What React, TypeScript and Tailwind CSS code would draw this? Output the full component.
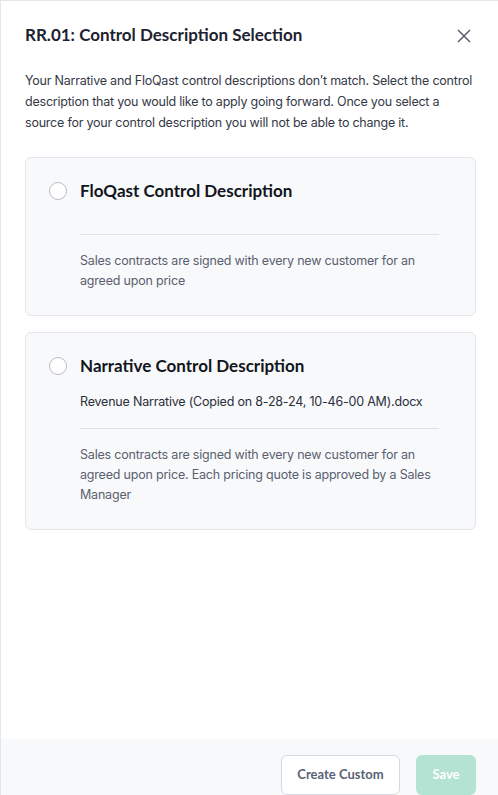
import React from 'react'

const heading = "font-['Lato','Noto_Sans',sans-serif] font-bold"
const body = "font-['Inter','Noto_Sans',sans-serif]"

type Option = {
  title: string
  source?: string
  description: string
}

const options: Option[] = [
  {
    title: 'FloQast Control Description',
    description: 'Sales contracts are signed with every new customer for an agreed upon price',
  },
  {
    title: 'Narrative Control Description',
    source: 'Revenue Narrative (Copied on 8-28-24, 10-46-00 AM).docx',
    description:
      'Sales contracts are signed with every new customer for an agreed upon price. Each pricing quote is approved by a Sales Manager',
  },
]

const App: React.FC = () => {
  return (
    <div className="h-[795px] w-[498px] overflow-hidden bg-white flex flex-col border-t border-l border-[#e3e6ec]">
      {/* Body */}
      <div className="flex-1 pl-6 pr-[22px]">
        <div className="flex items-center justify-between pt-[24px]">
          <h1 className={`${heading} text-[17px] leading-[20px] text-[#1d2230]`}>
            RR.01: Control Description Selection
          </h1>
          <button className="mr-[4px] mt-[2px] text-[#5a5f6b]">
            <svg width="16" height="16" viewBox="0 0 16 16" fill="none">
              <path d="M2 2L14 14M14 2L2 14" stroke="currentColor" strokeWidth="1.5" />
            </svg>
          </button>
        </div>

        <p className={`${body} mt-[25px] text-[12.5px] leading-[21px] tracking-[-0.22px] text-[#343946]`}>
          Your Narrative and FloQast control descriptions don’t match. Select the control
          description that you would like to apply going forward. Once you select a
          source for your control description you will not be able to change it.
        </p>

        <div className="mt-[24px] flex flex-col gap-4">
          {options.map((opt) => (
            <label
              key={opt.title}
              className="flex rounded-md border border-[#e3e6ec] bg-[#f8f9fb] pl-[23px] pr-[36px] pt-[23px] pb-[24px]"
            >
              <span className="mt-[1px] h-[18px] w-[18px] shrink-0 rounded-full border border-[#b9bdc6] bg-white" />
              <div className="ml-[13px] flex-1">
                <div className={`${heading} text-[17px] leading-[20px] text-[#111520]`}>
                  {opt.title}
                </div>
                {opt.source ? (
                  <div className={`${body} mt-[16px] text-[12.5px] leading-[20px] tracking-[-0.2px] text-[#2a2f3b]`}>
                    {opt.source}
                  </div>
                ) : null}
                <div className={`border-t border-[#dfe2ea] ${opt.source ? 'mt-[16px]' : 'mt-[33px]'}`} />
                <p className={`${body} mt-[16px] text-[12.5px] leading-[20px] tracking-[-0.2px] text-[#5a5f6f]`}>
                  {opt.description}
                </p>
              </div>
            </label>
          ))}
        </div>
      </div>

      {/* Footer */}
      <div className="h-[56px] shrink-0 bg-[#f8f9fb] flex items-start justify-end gap-4 pt-4 pr-[22px]">
        <button
          className={`${heading} h-[40px] w-[119px] rounded-md border border-[#d5d9e3] bg-white text-[13px] text-[#5a6175]`}
        >
          Create Custom
        </button>
        <button
          className={`${heading} h-[40px] w-[60px] rounded-md bg-[#b4e2d3] text-[13px] text-white`}
        >
          Save
        </button>
      </div>
    </div>
  )
}

export default App
